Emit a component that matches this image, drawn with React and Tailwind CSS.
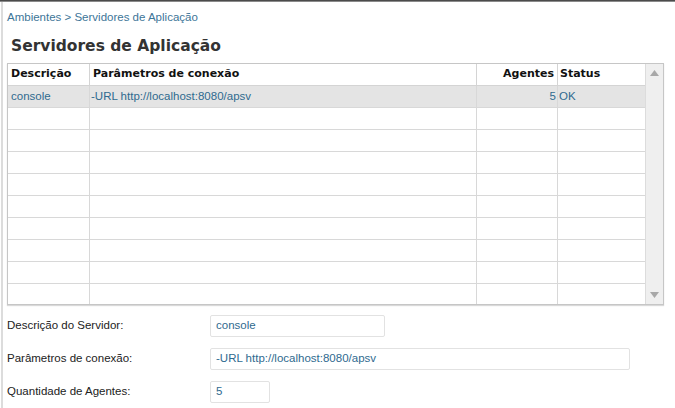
import React from "react";

const rows = [
  { desc: "console", params: "-URL http://localhost:8080/apsv", agents: "5", status: "OK", selected: true },
  ...Array.from({ length: 9 }, () => ({ desc: "", params: "", agents: "", status: "" })),
];

const headFont = { fontFamily: '"DejaVu Sans", sans-serif' };

function Field({ label, value, width }) {
  return (
    <div className="flex items-center h-[33px]">
      <div className="w-[203px] pt-[1px] text-[11.5px] text-[#222]">{label}</div>
      <div
        className={`${width} h-[22px] border border-[#e2e2e2] rounded-[2px] flex items-center px-[5px] text-[11.5px] text-[#2f6a8f]`}
      >
        {value}
      </div>
    </div>
  );
}

export default function App() {
  return (
    <div
      className="w-[675px] h-[408px] bg-white overflow-hidden flex flex-col"
      style={{ fontFamily: '"Liberation Sans", Arial, sans-serif' }}
    >
      <div className="h-[3px] bg-[#4b4b4b] border-b border-[#8a8a8a]" />
      <div className="flex-1 flex border-l-2 border-[#dcdcdc] ml-[1px]">
        <div className="flex-1 pl-[4px] pr-[7px]">
          <div className="h-[26px] flex items-center text-[11.5px] text-[#3d7598] pt-[5px]">
            Ambientes &gt; Servidores de Aplicação
          </div>
          <div
            className="h-[34px] flex items-center pl-[4px] pt-[3px] text-[15.5px] font-bold text-[#333]"
            style={headFont}
          >
            Servidores de Aplicação
          </div>

          <div className="mt-[1px] border border-[#c6c6c6] shadow-[0_1px_1px_rgba(0,0,0,0.15)] flex w-[657px]">
            <div className="flex-1">
              <div className="grid grid-cols-[82px_387px_81px_87px] h-[22px] border-b border-[#d4d4d4]">
                <div
                  className="pl-[3px] flex items-center text-[11px] font-bold text-[#111] border-r border-[#d4d4d4]"
                  style={headFont}
                >
                  Descrição
                </div>
                <div
                  className="pl-[3px] flex items-center text-[11px] font-bold text-[#111] border-r border-[#d4d4d4]"
                  style={headFont}
                >
                  Parâmetros de conexão
                </div>
                <div
                  className="pr-[3px] flex items-center justify-end text-[11px] font-bold text-[#111] border-r border-[#d4d4d4]"
                  style={headFont}
                >
                  Agentes
                </div>
                <div className="pl-[2px] flex items-center text-[11px] font-bold text-[#111]" style={headFont}>
                  Status
                </div>
              </div>
              {rows.map((r, i) => (
                <div
                  key={i}
                  className={`grid grid-cols-[82px_387px_81px_87px] ${
                    i < rows.length - 1 ? "h-[22px] border-b border-[#d8d8d8]" : "h-[20px]"
                  } ${r.selected ? "bg-[#e4e4e4]" : ""}`}
                >
                  <div className="pl-[3px] flex items-center text-[11.5px] text-[#2f6a8f] border-r border-[#d8d8d8]">
                    {r.desc}
                  </div>
                  <div className="pl-[1px] flex items-center text-[11.5px] text-[#2f6a8f] border-r border-[#d8d8d8]">
                    {r.params}
                  </div>
                  <div className="pr-[1px] flex items-center justify-end text-[11.5px] text-[#2f6a8f] border-r border-[#d8d8d8]">
                    {r.agents}
                  </div>
                  <div className="pl-[1px] flex items-center text-[11.5px] text-[#2f6a8f]">{r.status}</div>
                </div>
              ))}
            </div>
            <div className="w-[18px] bg-[#efefef] border-l border-[#dcdcdc] flex flex-col justify-between items-center py-[6px]">
              <svg width="9" height="6" viewBox="0 0 9 6">
                <path d="M4.5 0 L9 6 L0 6 Z" fill="#a8a8a8" />
              </svg>
              <svg width="9" height="6" viewBox="0 0 9 6">
                <path d="M0 0 L9 0 L4.5 6 Z" fill="#a8a8a8" />
              </svg>
            </div>
          </div>

          <div className="mt-[4px]">
            <Field label="Descrição do Servidor:" value="console" width="w-[175px]" />
            <Field label="Parâmetros de conexão:" value="-URL http://localhost:8080/apsv" width="w-[420px]" />
            <Field label="Quantidade de Agentes:" value="5" width="w-[60px]" />
          </div>
        </div>
      </div>
    </div>
  );
}
